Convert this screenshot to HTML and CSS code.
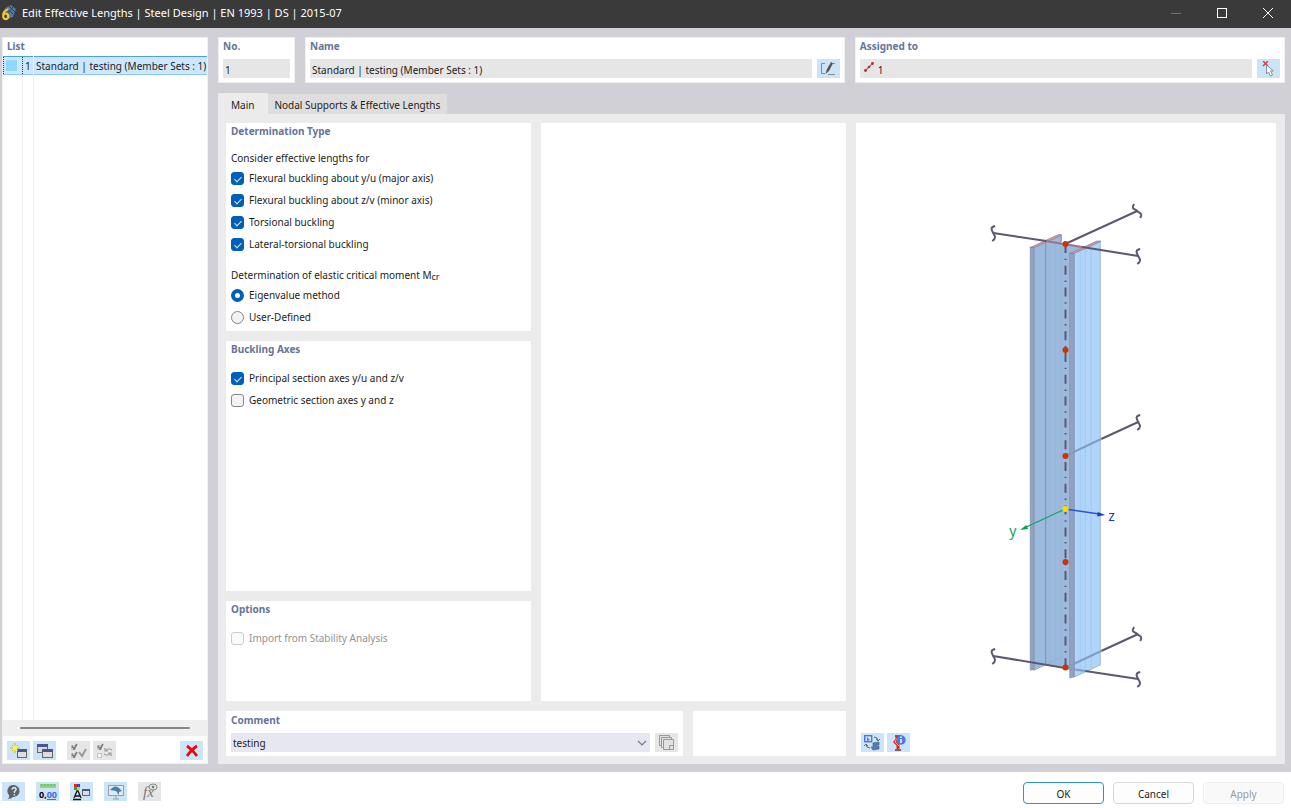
FILE: index.html
```html
<!DOCTYPE html>
<html lang="en">
<head>
    <meta charset="UTF-8">
    <meta name="viewport" content="width=device-width, initial-scale=1.0">
    <title>Edit Effective Lengths</title>
    <link rel="stylesheet" href="styles.css">
</head>
<body>
    <header class="titlebar">
        <svg class="app-icon" width="16" height="16" viewBox="0 0 16 16">
            <path d="M5 3 11 0l5 4-3 8-6 2z" fill="#56779f"/>
            <path d="M6 3l7 6M9 1l6 6M13 2 7 9" stroke="#2d4265" fill="none"/>
            <path d="M8.500 4Q3.500 5 3.200 10.500M5.800 8.500a2.600 2.800 0 1 1-.1 0z" fill="none" stroke="#f4c92c" stroke-width="2.200"/>
        </svg>
        <h1>Edit Effective Lengths | Steel Design | EN 1993 | DS | 2015-07</h1>
        <div class="window-buttons">
            <button type="button" aria-label="Minimize" disabled><svg width="12" height="12"><path d="M1 6.500h10" stroke="#707070"/></svg></button>
            <button type="button" aria-label="Maximize"><svg width="12" height="12"><rect x="1.500" y="1.500" width="9" height="9" fill="none" stroke="#fff"/></svg></button>
            <button type="button" aria-label="Close"><svg width="12" height="12"><path d="M1 1l10 10M11 1 1 11" stroke="#fff"/></svg></button>
        </div>
    </header>

    <main>
        <section class="panel list">
            <h2>List</h2>
            <div class="list-body">
                <table>
                    <tr>
                        <td class="color"><span></span></td>
                        <td class="number">1</td>
                        <td>Standard | testing (Member Sets : 1)</td>
                    </tr>
                </table>
            </div>
            <div class="scrollbar"><span></span></div>
            <div class="toolbar">
                <button type="button" class="tool" aria-label="New">
                    <svg width="18" height="16" viewBox="0 0 18 16">
                        <rect x="7.500" y="6.500" width="9" height="8" fill="#dcdde2" stroke="#666"/>
                        <path d="M7 7.500h10" stroke="#4a558c" stroke-width="3"/>
                        <path d="M5 0v10M0 5h10M2 2l6 6M8 2 2 8" stroke="#c9b31b"/>
                        <circle cx="5" cy="5" r="2.500" fill="#fff24a"/>
                    </svg>
                </button>
                <button type="button" class="tool" aria-label="Copy">
                    <svg width="18" height="16" viewBox="0 0 18 16">
                        <rect x="1.500" y="1.500" width="10" height="8" fill="#d6d9e0" stroke="#666"/>
                        <path d="M1 2.500h11" stroke="#4a558c" stroke-width="3"/>
                        <rect x="6.500" y="6.500" width="10" height="8" fill="#dcdde2" stroke="#666"/>
                        <path d="M6 7.500h11" stroke="#4a558c" stroke-width="3"/>
                    </svg>
                </button>
                <button type="button" class="tool apart" aria-label="Select all" disabled>
                    <svg width="18" height="16" viewBox="0 0 18 16">
                        <path d="M1.500 2.500h4v4h-4zM1.500 10.500h4v4h-4z" fill="#f4f4f4" stroke="#c4c4c4"/>
                        <path d="M2 3l2 3 3-5M2 11l2 3 3-5" fill="none" stroke="#777" stroke-width="1.500"/>
                        <path d="M9 9l3 4 4-7" fill="none" stroke="#999" stroke-width="2"/>
                    </svg>
                </button>
                <button type="button" class="tool" aria-label="Invert selection" disabled>
                    <svg width="18" height="16" viewBox="0 0 18 16">
                        <path d="M1.500 2.500h4v4h-4zM1.500 10.500h4v4h-4z" fill="#f4f4f4" stroke="#c4c4c4"/>
                        <path d="M2 3l2 3 3-5" fill="none" stroke="#777" stroke-width="1.500"/>
                        <path d="M16 7q-3-2-6 0M9 5v3h3M8 11q3 2 6 0M15 13v-3h-3" fill="none" stroke="#999" stroke-width="1.200"/>
                    </svg>
                </button>
                <button type="button" class="tool last" aria-label="Delete">
                    <svg width="14" height="14" viewBox="0 0 14 14"><path d="M2 2q6 4 10 10M12 2Q7 5 2 12" fill="none" stroke="#f00808" stroke-width="2.800"/></svg>
                </button>
            </div>
        </section>

        <form class="content">
            <div class="top-row">
                <section class="panel no">
                    <h2><label for="no">No.</label></h2>
                    <div class="field-row"><input id="no" type="text" value="1" readonly></div>
                </section>
                <section class="panel name">
                    <h2><label for="name">Name</label></h2>
                    <div class="field-row">
                        <input id="name" type="text" value="Standard | testing (Member Sets : 1)" readonly>
                        <button type="button" class="tool" aria-label="Edit name">
                            <svg width="18" height="16" viewBox="0 0 18 16">
                                <path d="M6 2.500H2.500v10H6M9 13.500h7M14 2.500h2" fill="none" stroke="#858b92"/>
                                <path d="M6.500 13 8 8l4-7 2 1.300L10 10z" fill="#555"/>
                            </svg>
                        </button>
                    </div>
                </section>
                <section class="panel assigned">
                    <h2><label for="assigned">Assigned to</label></h2>
                    <div class="field-row">
                        <div class="icon-field">
                            <svg width="10" height="14" viewBox="0 0 10 14">
                                <path d="M1 9 9 1" stroke="#858aa0" stroke-width="1.500"/>
                                <circle cx="1.500" cy="8.500" r="1.400" fill="#d0202c"/><circle cx="5" cy="5" r="1.300" fill="#d0202c"/><circle cx="8.500" cy="1.500" r="1.400" fill="#d0202c"/>
                            </svg>
                            <input id="assigned" type="text" value="1" readonly>
                        </div>
                        <button type="button" class="tool" aria-label="Select members">
                            <svg width="18" height="16" viewBox="0 0 18 16">
                                <path d="M3 0l5 5M8 0 3 5" stroke="#e33b48" stroke-width="1.500"/>
                                <path d="M6.500 4v9l2-2 2 4 2-1-2-4h3z" fill="#f8fbff" stroke="#8b929b"/>
                            </svg>
                        </button>
                    </div>
                </section>
            </div>

            <nav class="tabs">
                <button type="button" class="active">Main</button>
                <button type="button">Nodal Supports &amp; Effective Lengths</button>
            </nav>

            <div class="page">
                <div class="settings">
                    <div class="columns">
                        <div class="column">
                            <section class="card">
                                <h2>Determination Type</h2>
                                <p>Consider effective lengths for</p>
                                <label class="option"><input type="checkbox" checked>Flexural buckling about y/u (major axis)</label>
                                <label class="option"><input type="checkbox" checked>Flexural buckling about z/v (minor axis)</label>
                                <label class="option"><input type="checkbox" checked>Torsional buckling</label>
                                <label class="option"><input type="checkbox" checked>Lateral-torsional buckling</label>
                                <p class="second">Determination of elastic critical moment M<sub>cr</sub></p>
                                <label class="option"><input type="radio" name="moment" checked>Eigenvalue method</label>
                                <label class="option"><input type="radio" name="moment">User-Defined</label>
                            </section>
                            <section class="card axes">
                                <h2>Buckling Axes</h2>
                                <label class="option"><input type="checkbox" checked>Principal section axes y/u and z/v</label>
                                <label class="option"><input type="checkbox">Geometric section axes y and z</label>
                            </section>
                            <section class="card options">
                                <h2>Options</h2>
                                <label class="option disabled"><input type="checkbox" disabled>Import from Stability Analysis</label>
                            </section>
                        </div>
                        <div class="card column"></div>
                    </div>
                    <div class="comment-row">
                        <section class="card comment">
                            <h2><label for="comment">Comment</label></h2>
                            <div class="field-row">
                                <div class="select">
                                    <select id="comment"><option>testing</option></select>
                                    <svg width="10" height="6" viewBox="0 0 10 6"><path d="M1 1l4 4 4-4" fill="none" stroke="#777" stroke-width="1.200"/></svg>
                                </div>
                                <button type="button" class="tool" aria-label="Comment library" disabled>
                                    <svg width="18" height="17" viewBox="0 0 18 17">
                                        <path d="M1.500 1.500h10v10h-10z" fill="#e2e2e2" stroke="#999"/>
                                        <path d="M3.500 3.500h10v10h-10z" fill="#e2e2e2" stroke="#999"/>
                                        <path d="M5.500 5.500h10v10h-10z" fill="#e2e2e2" stroke="#999"/>
                                        <path d="M11.500 15v-3.500H15" fill="none" stroke="#999"/>
                                    </svg>
                                </button>
                            </div>
                        </section>
                        <div class="card"></div>
                    </div>
                </div>

                <section class="card view">
                    <svg class="model" viewBox="0 0 420 606">
                        <defs>
                            <path id="break" d="M2 -7C-4-6-1-2 0 0S4 5-1 8"/>
                            <path id="break-up" d="M-3-7C-7-2-2-2 0 0S6 2 3 7"/>
                        </defs>

                        <!-- left flange and web -->
                        <path d="M177 124l28-12v422l-28 13z" fill="#9bbade"/>
                        <path d="M189 118l40 7-15 8v413l-25-4z" fill="#9bbade"/>
                        <path d="M174 124h4v423h-4z" fill="#91a3c2" stroke="#7e8ba9" stroke-width=".6"/>
                        <path d="M178 547l11-5" stroke="#86a5c9"/>
                        <path d="M189 542l16-8" stroke="#86a5c9" stroke-width=".5"/>
                        <path d="M174 124.500h4l27-12v-1h-3z" fill="#c39aa6" stroke="#84718d" stroke-width=".5"/>
                        <path d="M205 112v7" stroke="#7890b3"/>
                        <path d="M189.500 118v424" stroke="#7e8eae"/>
                        <path d="M194 119v423M199 119v423M205 120v422" stroke="#8cacd3" stroke-width=".4"/>
                        <path d="M189 118l40 6.500" stroke="#a36f85" stroke-width="2"/>

                        <!-- right flange -->
                        <path d="M218 130l26-12v424l-26 12z" fill="#b0d5fb" stroke="#8ca6c8" stroke-width=".8"/>
                        <path d="M224 128v423M229 126v422M235 123v422" stroke="#98bde5" stroke-width=".5"/>
                        <path d="M213.500 130h4.500v424l-4.500 1z" fill="#91a3c2" stroke="#7e8ba9" stroke-width=".6"/>
                        <path d="M213.500 130.500h4.500l26.500-12v-.5h-4z" fill="#c39aa6" stroke="#84718d" stroke-width=".5"/>

                        <!-- connected members -->
                        <g fill="none" stroke="#5c596e" stroke-width="2">
                            <path d="M137 110l53 8M209 121l72-33M226 124l56 9"/>
                            <path d="M245 316l37-17M137 533l72 12M245 528l37-17M229 548l53 8"/>
                            <path d="M209 333l36-17M209 545l36-17M209 545l20 3" stroke="#819dc0"/>
                            <use href="#break" x="137" y="110"/>
                            <use href="#break-up" x="281" y="88"/>
                            <use href="#break" x="282" y="133"/>
                            <use href="#break" x="282" y="299"/>
                            <use href="#break" x="137" y="533"/>
                            <use href="#break-up" x="281" y="511"/>
                            <use href="#break" x="282" y="556"/>
                        </g>

                        <!-- member axis -->
                        <path d="M209.300 121v424" stroke="#5c596e" stroke-width="2" stroke-dasharray="9 5.700 1.400 5.700"/>
                        <g fill="#cf3300">
                            <circle cx="209.300" cy="121" r="3"/>
                            <circle cx="209.300" cy="227" r="3"/>
                            <circle cx="209.300" cy="333" r="3"/>
                            <circle cx="209.300" cy="439" r="3"/>
                            <circle cx="209.300" cy="544.500" r="3"/>
                        </g>

                        <!-- local axes -->
                        <path d="M209 386l-40 18.500" stroke="#16a55a" stroke-width="1.300"/>
                        <path d="M164 407l6-5 2 4z" fill="#0da04c"/>
                        <path d="M209 386l34 5" stroke="#2b55cd" stroke-width="1.300"/>
                        <path d="M249 392l-8 1.500.500-4.500z" fill="#1440c0"/>
                        <circle cx="209.300" cy="386" r="3" fill="#ffdc00"/>
                        <text x="153" y="413" fill="#16a55a">y</text>
                        <text x="252" y="398" fill="#1440c0">z</text>
                    </svg>
                    <div class="toolbar">
                        <button type="button" class="tool" aria-label="Change view">
                            <svg width="18" height="17" viewBox="0 0 18 17">
                                <rect x="1.700" y="1.700" width="7" height="6" fill="#dbe9ff" stroke="#4477ea" stroke-width="1.400"/>
                                <path d="M4 3v4l3-1z" fill="#4477ea"/>
                                <path d="M11 3q4 0 4 4M13 5l2 2 2-2M3 10q0 4 4 4M1 12l2-2 2 2" fill="none" stroke="#666"/>
                                <path d="M10 9l6-1v3l-6 1zM8 13l8-1v3l-6 1z" fill="#567da9" stroke="#365b85" stroke-width=".6"/>
                            </svg>
                        </button>
                        <button type="button" class="tool" aria-label="Member info">
                            <svg width="18" height="17" viewBox="0 0 18 17">
                                <path d="M6 2h6M6 16h6" stroke="#444" stroke-width="1.500"/>
                                <path d="M8 2v3L6 8l3 3v4" fill="none" stroke="#df2525" stroke-width="3"/>
                                <path d="M8 4 6 8l4 4" fill="none" stroke="#ffbb31"/>
                                <circle cx="12" cy="6" r="4.700" fill="#4a78e8"/>
                                <path d="M12 5v4M12 2.500V4" stroke="#fff" stroke-width="1.500"/>
                            </svg>
                        </button>
                    </div>
                </section>
            </div>
        </form>
    </main>

    <footer>
        <button type="button" class="tool" aria-label="Help">
            <svg width="18" height="16" viewBox="0 0 18 16">
                <path d="M9 1a6 6 0 1 1-1 12q-2 2-5 2 2-2 1-4A6 6 0 0 1 9 1z" fill="#5b6268"/>
                <path d="M7 5.500q.500-2 2.500-1.700 2 .400 1.500 2-.300 1-1.600 1.700V9M9.400 10v1.500" fill="none" stroke="#dcecf9" stroke-width="1.400"/>
            </svg>
        </button>
        <button type="button" class="tool" aria-label="Units">
            <svg width="20" height="18" viewBox="0 0 20 18">
                <path d="M2 1h16v4H2z" fill="#8ed47e"/><path d="M4 1v2M7 1v2M10 1v2M13 1v2M16 1v2" stroke="#67ae5b"/>
                <text class="units" x="1" y="15">0,<tspan fill="#386de4">00</tspan></text>
                <path d="M9 16.500h9" stroke="#386de4"/>
            </svg>
        </button>
        <button type="button" class="tool" aria-label="Colors">
            <svg width="18" height="18" viewBox="0 0 18 18">
                <path d="M1 1h3v3H1z" fill="#e22"/><path d="M4 1h3v3H4z" fill="#2b49df"/><path d="M1 4h3v3H1z" fill="#20a83d"/><path d="M4 4h3v3H4z" fill="#e8cd1e"/>
                <path d="M1 15 4 8h1l3 7M2 13h5M0 16.500h8" fill="none" stroke="#111" stroke-width="1.300"/>
                <rect x="9.500" y="6.500" width="7" height="6" fill="#dcdde2" stroke="#666"/><path d="M9 7h8" stroke="#4a558c" stroke-width="2"/>
            </svg>
        </button>
        <button type="button" class="tool" aria-label="Display">
            <svg width="18" height="17" viewBox="0 0 18 17">
                <rect x="1.500" y="2.500" width="15" height="10" fill="#d9ecfa" stroke="#999fa5"/>
                <path d="M3 7q5-6 9-2l3 3-3 1v3L9 8z" fill="#4c7ca8"/>
                <path d="M9 13v3M6 16h6" stroke="#999fa5"/>
            </svg>
        </button>
        <button type="button" class="tool" aria-label="Formula" disabled>
            <svg width="19" height="18" viewBox="0 0 19 18">
                <text class="formula" x="3" y="14">fx</text>
                <ellipse cx="13" cy="4" rx="4" ry="3" fill="none" stroke="#888"/><circle cx="13" cy="4" r="1.300" fill="#777"/>
            </svg>
        </button>
        <div class="dialog-buttons">
            <button type="button" class="primary">OK</button>
            <button type="button">Cancel</button>
            <button type="button" disabled>Apply</button>
        </div>
    </footer>
</body>
</html>
```

FILE: styles.css
```css
:root {
    --frame: #d1d0d6;
    --page: #ebebeb;
    --field: #e6e6e6;
    --tool: #cce4f7;
    --heading: #667499;
    --accent: #005fb8;
    --text: #1c1c1c;
}

* {
    margin: 0;
    padding: 0;
    box-sizing: border-box;
}

body {
    display: flex;
    flex-direction: column;
    min-height: 100vh;
    font-family: "Noto Sans", "Open Sans", sans-serif;
    font-size: 10px;
    line-height: 16px;
    color: var(--text);
    background-color: var(--frame);
}

button,
input,
select {
    font: inherit;
    color: inherit;
    border: none;
}

h2 {
    font-size: 10px;
    line-height: 16px;
    color: var(--heading);
}

svg {
    display: block;
    flex: none;
}

.titlebar {
    display: flex;
    align-items: center;
    height: 28px;
    padding-bottom: 2px;
    background-color: #3a3a3a;
    color: #fff;
}

.titlebar h1 {
    margin-left: 6px;
    font-size: 11px;
    font-weight: normal;
}

.window-buttons {
    display: flex;
    margin-left: auto;
}

.window-buttons button {
    display: flex;
    align-items: center;
    justify-content: center;
    width: 46px;
    height: 24px;
    background: none;
}

main {
    display: flex;
    flex: 1;
    gap: 10px;
    padding: 9px 6px 8px 2px;
}

.panel {
    background-color: #fff;
    border: 1px solid #f0f0f1;
}

.tool {
    display: flex;
    align-items: center;
    justify-content: center;
    flex: none;
    width: 23px;
    height: 19px;
    background-color: var(--tool);
}

.tool:disabled {
    background-color: var(--field);
}

.toolbar {
    display: flex;
    gap: 3px;
    padding: 5px 4px 3px;
}

/* List */
.list {
    display: flex;
    flex-direction: column;
    width: 206px;
}

.list h2 {
    padding-left: 4px;
    margin-bottom: 2px;
}

.list-body {
    flex: 1;
    background:
        linear-gradient(#eee, #eee) 19px 0 / 1px 100% no-repeat,
        linear-gradient(#eee, #eee) 30px 0 / 1px 100% no-repeat;
}

.list table {
    width: 100%;
    border-collapse: collapse;
    table-layout: fixed;
    white-space: nowrap;
    background-color: #cce8ff;
}

.list tr {
    border-top: 1px solid #4ca0e0;
    border-bottom: 1px solid #8fc8f0;
}

.list td {
    height: 18px;
    padding-left: 2px;
}

.list .color {
    width: 19px;
    padding: 0 2px;
    border: 1px dotted #333;
}

.list .color span {
    display: block;
    width: 11px;
    height: 11px;
    background-color: #8ed8f8;
}

.list .number {
    width: 11px;
    border-right: 1px solid #eee;
}

.scrollbar {
    padding: 7px 17px;
    background-color: #efefef;
}

.scrollbar span {
    display: block;
    height: 2px;
    border-radius: 1px;
    background-color: #868686;
}

.toolbar .apart {
    margin-left: 8px;
}

.toolbar .last {
    margin-left: auto;
}

/* Right side */
.content {
    display: flex;
    flex-direction: column;
    flex: 1;
    min-width: 0;
}

.top-row {
    display: flex;
    gap: 10px;
    height: 46px;
}

.top-row .panel {
    padding: 0 4px;
}

.top-row .no {
    width: 77px;
}

.top-row .name {
    flex: 541;
}

.top-row .assigned {
    flex: 429;
}

.field-row {
    display: flex;
    gap: 5px;
    margin-top: 5px;
}

.field-row input {
    flex: 1;
    min-width: 0;
    height: 19px;
    padding: 2px 2px 0;
    background-color: var(--field);
}

.icon-field {
    display: flex;
    flex: 1;
    align-items: center;
    gap: 2px;
    padding-left: 4px;
    background-color: var(--field);
}

.tabs {
    display: flex;
    align-items: flex-end;
    margin-top: 10px;
}

.tabs button {
    height: 20px;
    padding: 2px 7px 0 6px;
    background-color: #dedede;
}

.tabs .active {
    height: 21px;
    padding: 2px 14px 0 13px;
    background-color: var(--page);
}

.page {
    display: flex;
    flex: 1;
    gap: 10px;
    padding: 9px 9px 8px 8px;
    background-color: var(--page);
}

.card {
    background-color: #fff;
    padding: 0 5px;
}

.settings {
    display: flex;
    flex-direction: column;
    flex: 619;
    gap: 10px;
}

.columns {
    display: grid;
    grid-template-columns: 1fr 1fr;
    flex: 1;
    gap: 10px;
}

.column {
    display: flex;
    flex-direction: column;
    gap: 10px;
}

.column h2 {
    margin-bottom: 10px;
}

.column .card {
    padding-bottom: 3px;
}

.column p {
    line-height: 18px;
}

.column .second {
    margin-top: 11px;
}

.axes {
    flex: 1;
}

.column .options {
    min-height: 100px;
}

sub {
    font-size: 9px;
    line-height: 0;
    vertical-align: -1px;
}

.option {
    display: flex;
    align-items: center;
    gap: 5px;
    height: 22px;
}

.option.disabled {
    color: #929292;
}

input[type="checkbox"],
input[type="radio"] {
    display: flex;
    justify-content: center;
    width: 13px;
    height: 13px;
    appearance: none;
    border: 1px solid #868686;
    border-radius: 3px;
    background-color: #f3f3f3;
}

input[type="radio"] {
    border-radius: 50%;
}

input[type="checkbox"]:checked {
    border-color: var(--accent);
    background-color: var(--accent);
}

input[type="checkbox"]:checked::before {
    content: "";
    width: 3px;
    height: 6px;
    margin-top: 2px;
    border: solid #d5e6f7;
    border-width: 0 1px 1px 0;
    transform: rotate(45deg);
}

input[type="radio"]:checked {
    border: 4px solid var(--accent);
    background-color: #fff;
}

input[type="checkbox"]:disabled {
    border-color: #ccc;
    background-color: #fafafa;
}

.comment-row {
    display: grid;
    grid-template-columns: 3fr 1fr;
    gap: 10px;
    height: 45px;
}

.select {
    position: relative;
    flex: 1;
}

.select select {
    width: 100%;
    height: 19px;
    padding: 0 2px;
    appearance: none;
    border-radius: 0;
    background-color: #e7e7f2;
}

.select svg {
    position: absolute;
    right: 3px;
    top: 7px;
    pointer-events: none;
}

.comment {
    padding-top: 1px;
}

/* Model preview */
.view {
    display: flex;
    flex-direction: column;
    flex: 420;
    padding: 0;
}

.model {
    flex: 1 0 auto;
    width: 100%;
    height: 0;
}

.model text {
    font-size: 14px;
}

.view .toolbar {
    padding: 4px 5px;
}

/* Footer */
footer {
    display: flex;
    gap: 11px;
    padding: 10px 7px 4px 2px;
    background-color: #fff;
}

.units {
    font-size: 9px;
    font-weight: bold;
}

.formula {
    font-family: "Liberation Serif", serif;
    font-size: 15px;
    font-style: italic;
    fill: #777;
}

.dialog-buttons {
    display: flex;
    gap: 9px;
    margin-left: auto;
}

.dialog-buttons button {
    width: 81px;
    height: 22px;
    padding-top: 2px;
    border: 1px solid #d8d8d8;
    border-radius: 4px;
    background-color: #fdfdfd;
}

.dialog-buttons .primary {
    border-color: #2f91d8;
}

.dialog-buttons button:disabled {
    border-color: #eee;
    background-color: #f9f9f9;
    color: #999;
}
```
